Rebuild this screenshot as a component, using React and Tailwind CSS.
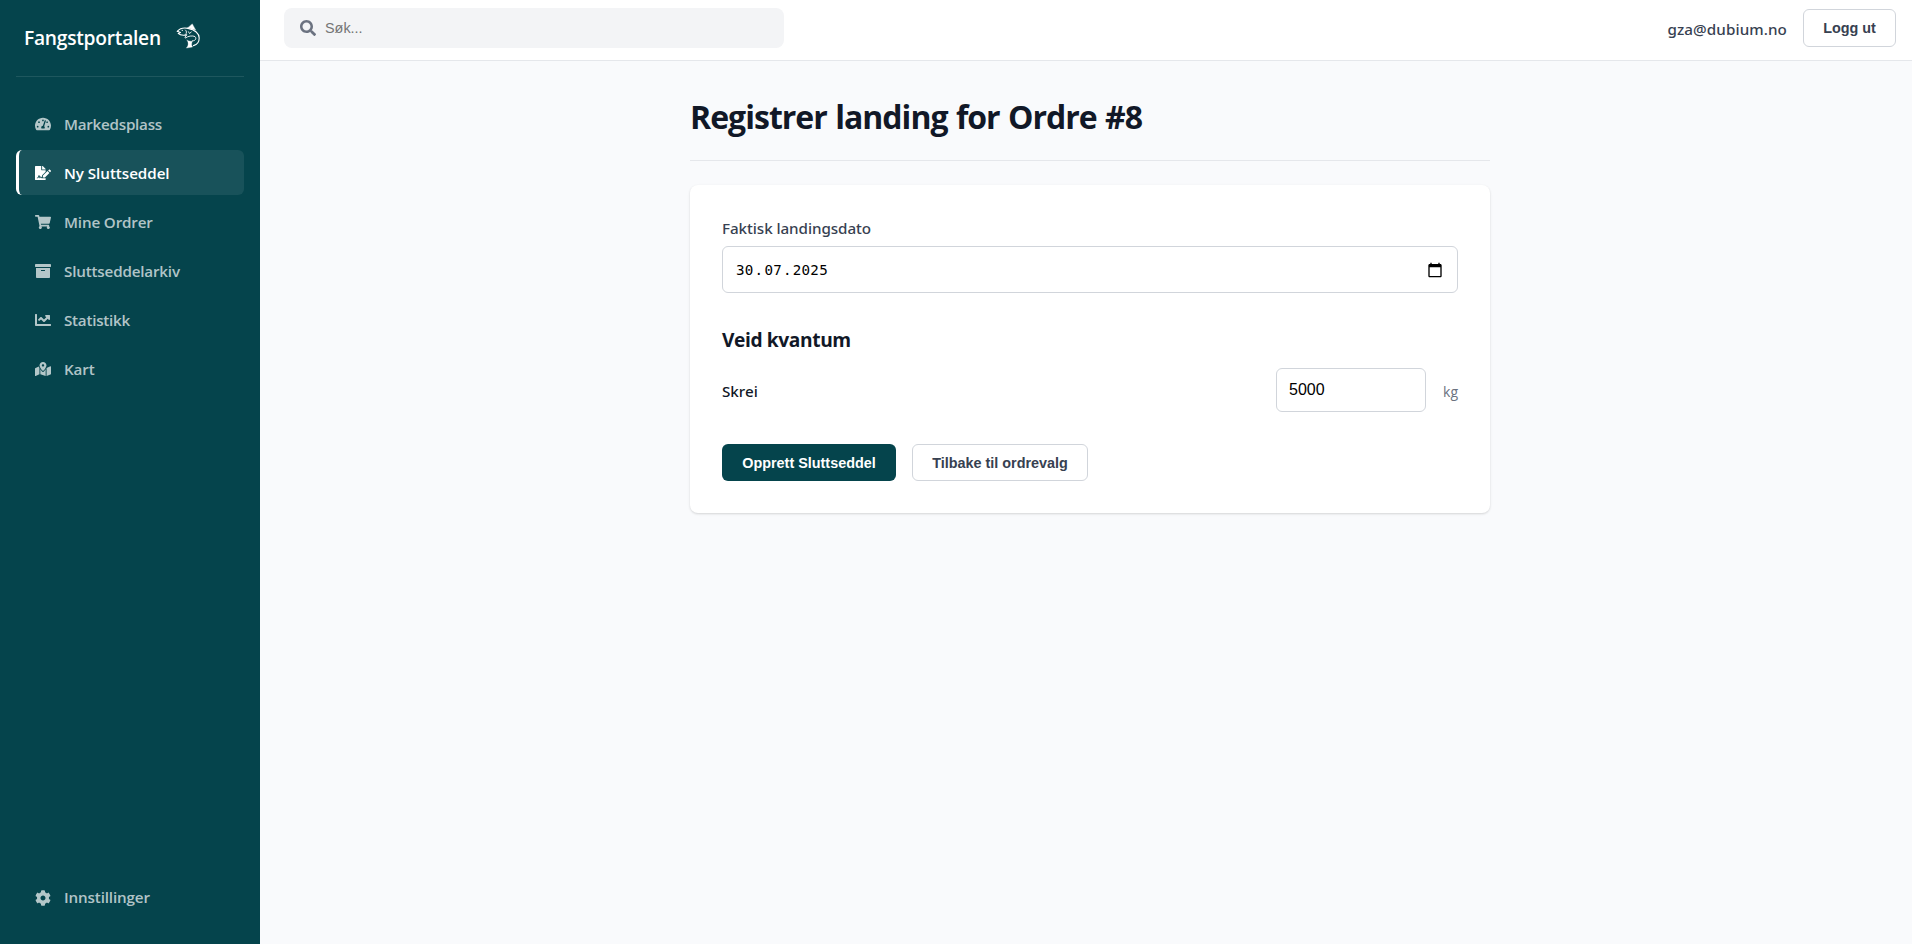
import { FaTachometerAlt, FaFileSignature, FaShoppingCart, FaArchive, FaChartLine, FaMapMarkedAlt, FaCog, FaSearch } from "react-icons/fa";

const links = [
  { label: "Markedsplass", icon: FaTachometerAlt, track: "pt-0.5 tracking-[-0.25px]" },
  { label: "Ny Sluttseddel", icon: FaFileSignature, active: true, track: "pt-0.5 tracking-[-0.05px]" },
  { label: "Mine Ordrer", icon: FaShoppingCart, track: "pt-0.5 tracking-[-0.15px]" },
  { label: "Sluttseddelarkiv", icon: FaArchive, track: "pt-0.5 tracking-[-0.18px]" },
  { label: "Statistikk", icon: FaChartLine, track: "pt-0.5 tracking-[-0.25px]" },
  { label: "Kart", icon: FaMapMarkedAlt, track: "pt-0.5 tracking-[-0.1px]" },
];

function NavLink({ label, icon: Icon, active, track }) {
  return (
    <a
      className={
        "flex h-[45px] items-center gap-[13px] rounded-md border-l-[3px] pl-4 text-[15.2px] font-semibold " +
        (active ? "border-white bg-white/[0.08] text-white" : "border-transparent text-white/70")
      }
    >
      <Icon className="size-4 shrink-0" />
      <span className={track}>{label}</span>
    </a>
  );
}

function Fish() {
  return (
    <svg className="mb-0.5 size-8" viewBox="0 0 32 32" fill="none" stroke="white" strokeLinecap="round" strokeLinejoin="round">
      <path d="M5.300 10.300 C7.500 7.800 12 6.600 16 7.400 C23 8.600 27.200 12.500 27.200 17 C27.200 21.500 25 23.600 21.500 24.600" strokeWidth="1.100" />
      <path d="M5.300 10.300 L8.500 11.400 L6.200 12.400 C8 14.200 11.500 14.400 14.500 13.900" strokeWidth="1.100" />
      <path d="M15.500 6.900 C17.500 5.500 18.500 4 20.300 2.900 L23.600 8.900 Z" fill="white" strokeWidth="0.400" />
      <path d="M10 9.300 L10.600 9.400 M13.500 9 C14.800 10 14.800 12 13.800 13.200 M16.500 10.800 L17.500 12.500 L19.300 11" strokeWidth="0.900" />
      <path d="M14.500 14 C13.200 15.500 12.800 16.700 13.300 17.100 C16 15 20.500 14.300 23 15.600 C24.800 17.500 23.500 20 20.500 19.800" strokeWidth="0.900" />
      <path d="M15 19.200 C17 20.300 19 20.400 20.500 20 C19.300 22.500 19.300 24.500 20.600 26 L14.300 27.100 C16.700 24.700 16.700 21.500 15 19.200 Z" fill="white" strokeWidth="0.300" />
    </svg>
  );
}

export default function App() {
  return (
    <div className="flex h-[944px] bg-[#f9fafc] font-['Open_Sans','Noto_Sans',sans-serif] text-[#111827]">
      <aside className="flex w-[260px] shrink-0 flex-col bg-[#05444c] px-4">
        <div className="flex h-[77px] shrink-0 items-center gap-[11px] border-b border-[#1e575e] pl-2">
          <span className="text-[19.2px] font-semibold tracking-[-0.25px] text-white">Fangstportalen</span>
          <Fish />
        </div>
        <nav className="mt-6 flex flex-col gap-1">
          {links.map((l) => (
            <NavLink key={l.label} {...l} />
          ))}
        </nav>
        <div className="mt-auto pb-6">
          <NavLink label="Innstillinger" icon={FaCog} track="tracking-[-0.14px]" />
        </div>
      </aside>

      <div className="flex min-w-0 flex-1 flex-col">
        <header className="flex h-[61px] shrink-0 items-start justify-between border-b border-[#e5e7eb] bg-white pl-6 pr-4">
          <label className="mt-2 flex h-10 w-[500px] items-center gap-[9px] rounded-lg bg-[#f3f4f6] pl-4 text-[#6b7280]">
            <FaSearch className="size-4" />
            <span className="pt-0.5 font-['Liberation_Sans',sans-serif] text-[14.4px] text-[#757575]">Søk...</span>
          </label>
          <div className="mt-[9px] flex items-center gap-4">
            <span className="mt-0.5 font-['Noto_Sans',sans-serif] text-[15.2px] font-medium tracking-[0.1px] text-[#374151]">gza@dubium.no</span>
            <button className="h-[38px] w-[93px] rounded-md border border-[#d1d5db] bg-white pt-0.5 font-['Liberation_Sans',sans-serif] text-[14.4px] font-bold text-[#374151]">
              Logg ut
            </button>
          </div>
        </header>

        <main className="ml-[430px] w-[800px] pt-8">
          <div className="h-[68px] border-b border-[#e5e7eb]">
            <h1 className="text-[32px] leading-[47px] font-bold tracking-[-0.98px] [word-spacing:1px]">Registrer landing for Ordre #8</h1>
          </div>
          <section className="mt-6 h-[328px] rounded-lg bg-white px-8 pt-8 shadow-[0_1px_3px_rgba(0,0,0,0.1),0_1px_2px_rgba(0,0,0,0.06)]">
            <div className="font-['Noto_Sans',sans-serif] text-[15.2px] leading-[22px] font-medium tracking-[-0.06px] text-[#374151]">Faktisk landingsdato</div>
            <div className="mt-[7px] flex h-[47px] items-center justify-between rounded-md border border-[#d1d5db] pr-[14px] pl-[12px] text-black">
              <span className="flex pt-0.5 font-['DejaVu_Sans_Mono',monospace] text-[14.2px] tracking-[0.25px]">
                <span className="px-px">30</span>.<span className="px-px">07</span>.<span className="px-px">2025</span>
              </span>
              <svg className="size-4" viewBox="0 0 24 24">
                <path d="M20 3h-1V1h-2v2H7V1H5v2H4c-1.100 0-2 .9-2 2v16c0 1.100.9 2 2 2h16c1.100 0 2-.9 2-2V5c0-1.100-.9-2-2-2zm0 18H4V8h16v13z" />
              </svg>
            </div>
            <h2 className="mt-8 text-[19.2px] leading-[30px] font-bold tracking-[-0.4px]">Veid kvantum</h2>
            <div className="mt-[13px] flex h-11 items-center">
              <span className="mt-0.5 flex-1 font-['Noto_Sans',sans-serif] text-[15.2px] font-medium">Skrei</span>
              <div className="flex h-11 w-[150px] items-center rounded-md border border-[#d1d5db] pb-px pl-3 font-['Liberation_Sans',sans-serif] text-base text-black">
                5000
              </div>
              <span className="mt-[3px] w-8 text-right text-[14px] text-[#6b7280]">kg</span>
            </div>
            <div className="mt-8 flex gap-4 font-['Liberation_Sans',sans-serif] text-[14.4px] font-bold">
              <button className="h-[37px] w-[174px] rounded-md bg-[#05444c] pt-0.5 text-white">Opprett Sluttseddel</button>
              <button className="h-[37px] w-[176px] rounded-md border border-[#d1d5db] bg-white pt-0.5 text-[#374151]">Tilbake til ordrevalg</button>
            </div>
          </section>
        </main>
      </div>
    </div>
  );
}
